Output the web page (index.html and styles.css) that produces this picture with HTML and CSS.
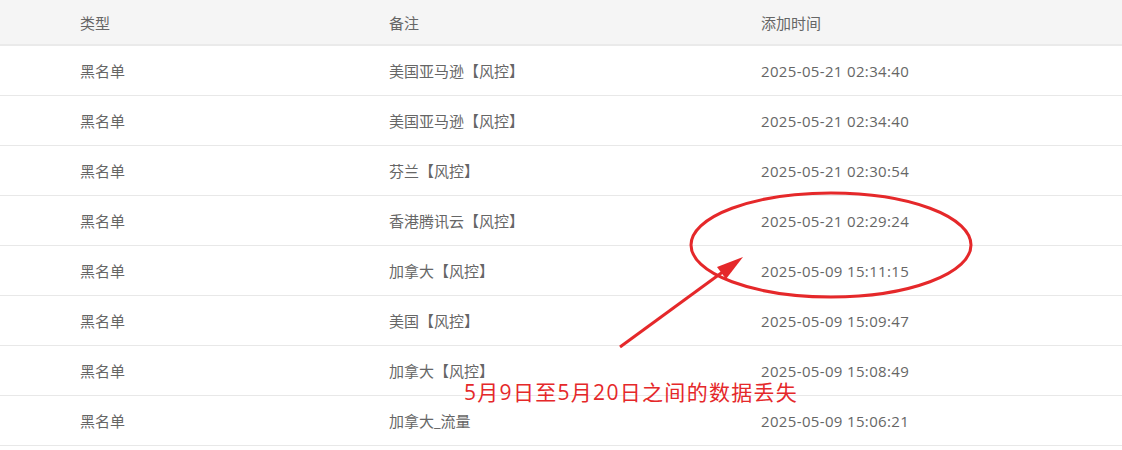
FILE: index.html
```
<html>
<head>
	<meta charset="utf-8">
	<link rel="stylesheet" href="styles.css">
</head>
<body>
  <div class="wrap">
    <div class="table">
      <div class="row head">
        <div class="cell">类型</div>
        <div class="cell">备注</div>
        <div class="cell">添加时间</div>
      </div>
      <div class="row">
        <div class="cell">黑名单</div>
        <div class="cell">美国亚马逊【风控】</div>
        <div class="cell time">2025-05-21 02:34:40</div>
      </div>
      <div class="row">
        <div class="cell">黑名单</div>
        <div class="cell">美国亚马逊【风控】</div>
        <div class="cell time">2025-05-21 02:34:40</div>
      </div>
      <div class="row">
        <div class="cell">黑名单</div>
        <div class="cell">芬兰【风控】</div>
        <div class="cell time">2025-05-21 02:30:54</div>
      </div>
      <div class="row">
        <div class="cell">黑名单</div>
        <div class="cell">香港腾讯云【风控】</div>
        <div class="cell time">2025-05-21 02:29:24</div>
      </div>
      <div class="row">
        <div class="cell">黑名单</div>
        <div class="cell">加拿大【风控】</div>
        <div class="cell time">2025-05-09 15:11:15</div>
      </div>
      <div class="row">
        <div class="cell">黑名单</div>
        <div class="cell">美国【风控】</div>
        <div class="cell time">2025-05-09 15:09:47</div>
      </div>
      <div class="row">
        <div class="cell">黑名单</div>
        <div class="cell">加拿大【风控】</div>
        <div class="cell time">2025-05-09 15:08:49</div>
      </div>
      <div class="row">
        <div class="cell">黑名单</div>
        <div class="cell">加拿大_流量</div>
        <div class="cell time">2025-05-09 15:06:21</div>
      </div>
    </div>

    <!-- red marks drawn over the screenshot -->
    <svg class="marks" width="1122" height="450" viewBox="0 0 1122 450">
      <ellipse cx="831" cy="245" rx="140" ry="52" fill="none" stroke="#e5282a" stroke-width="3"/>
      <line x1="620" y1="347" x2="724" y2="271" stroke="#e5282a" stroke-width="3"/>
      <polygon points="743,257 717,267 726,279" fill="#e5282a"/>
    </svg>
    <div class="note">5月9日至5月20日之间的数据丢失</div>
  </div>
</body>
</html>
```

FILE: styles.css
```
body {
	margin: 0;
	background: #fff;
	font-family: "Open Sans", "Noto Sans CJK SC", sans-serif;
	font-size: 15px;
	color: #666;
}
.wrap {
	position: relative;
	width: 1122px;
	height: 450px;
	overflow: hidden;
}
.row {
	display: grid;
	grid-template-columns: 389px 372px 1fr;
	height: 49px;
	align-items: center;
	border-bottom: 1px solid #e8e8e8;
}
.row.head {
	height: 44px;
	background: #f5f5f5;
	border-bottom: 2px solid #eaeaea;
}
.cell {
	padding-left: 80px;
	white-space: nowrap;
}
.cell + .cell {
	padding-left: 0;
}
.time {
	letter-spacing: 0.35px;
}
.marks {
	position: absolute;
	left: 0;
	top: 0;
}
.note {
	position: absolute;
	left: 464px;
	top: 377px;
	font-size: 21px;
	letter-spacing: 1.3px;
	line-height: 30px;
	color: #e5282a;
}
```
